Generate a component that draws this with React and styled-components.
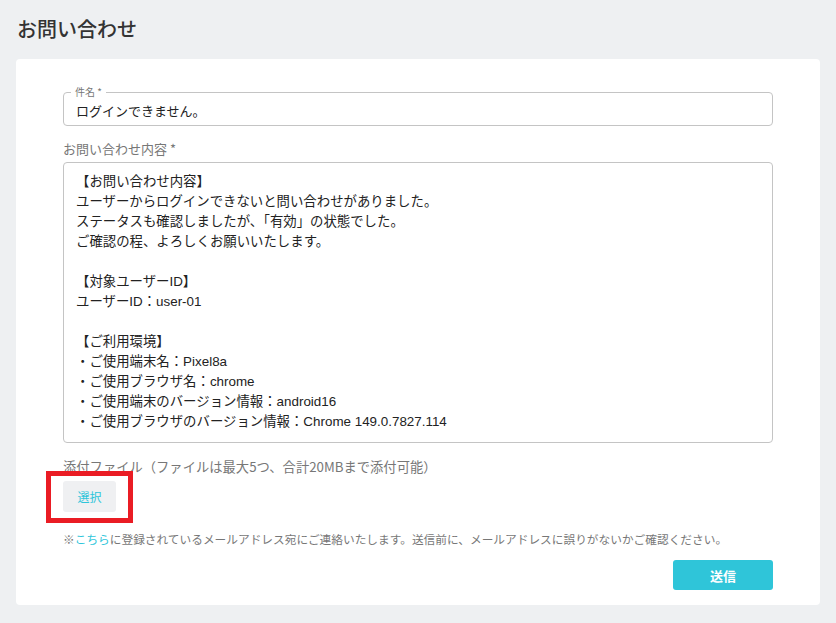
import React from 'react'
import styled, { createGlobalStyle } from 'styled-components'

const GlobalStyle = createGlobalStyle`
  body {
    margin: 0;
    background: #eef0f2;
    font-family: "Noto Sans CJK JP", "Noto Sans", sans-serif;
    color: #333;
  }
`

const Page = styled.div`
  display: flex;
  flex-direction: column;
  padding: 0 16px;
  min-height: 623px;
  box-sizing: border-box;
`

const Title = styled.h1`
  margin: 0;
  padding: 14px 0 0 1px;
  height: 59px;
  font-size: 20px;
  font-weight: 500;
  color: #333;
  box-sizing: border-box;
`

const Card = styled.div`
  background: #fff;
  border-radius: 4px;
  padding: 33px 47px 15px;
  display: flex;
  flex-direction: column;
`

const Outlined = styled.div`
  position: relative;
  border: 1px solid #c4c4c4;
  border-radius: 4px;
  padding: 0 12px;
  height: ${(p) => p.h}px;
  box-sizing: border-box;
  display: flex;
  align-items: center;
`

const FloatLabel = styled.span`
  position: absolute;
  top: -8px;
  left: 7px;
  padding: 0 4px;
  background: #fff;
  font-size: 10px;
  line-height: 14px;
  color: #777;
`

const InputText = styled.span`
  font-size: 13px;
  color: #222;
  padding-top: 2px;
`

const FieldLabel = styled.div`
  font-size: ${(p) => p.fs || 13}px;
  color: #777;
  margin-top: ${(p) => p.mt}px;
  line-height: 18px;
`

const TextArea = styled.div`
  margin-top: 4px;
  border: 1px solid #c4c4c4;
  border-radius: 4px;
  height: 281px;
  box-sizing: border-box;
  padding: 9px 12px 9px;
  white-space: pre-wrap;
  font-family: "Liberation Sans", "Noto Sans CJK JP", sans-serif;
  font-size: 13.4px;
  line-height: 20px;
  color: #222;
`

const UploadWrap = styled.div`
  position: relative;
  margin-top: 5px;
  align-self: flex-start;
`

const GrayButton = styled.button`
  width: 53px;
  height: 31px;
  border: none;
  border-radius: 3px;
  background: #eff0f2;
  color: #2ec5da;
  font-family: inherit;
  font-size: 12px;
  cursor: pointer;
`

const Highlight = styled.div`
  position: absolute;
  left: -17px;
  top: -10px;
  width: 87px;
  height: 52px;
  border: 5px solid #ea1c24;
  box-sizing: border-box;
  pointer-events: none;
`

const Note = styled.p`
  margin: 18px 0 0;
  font-size: 11.7px;
  line-height: 18px;
  color: #777;
`

const Link = styled.a`
  color: #2ec5da;
  text-decoration: none;
`

const Footer = styled.div`
  display: flex;
  justify-content: flex-end;
  margin-top: 12px;
`

const SendButton = styled.button`
  width: 100px;
  height: 30px;
  border: none;
  border-radius: 3px;
  background: #2fc5d9;
  color: #fff;
  font-family: inherit;
  font-size: 13px;
  font-weight: 700;
  cursor: pointer;
`

const body = `【お問い合わせ内容】
ユーザーからログインできないと問い合わせがありました。
ステータスも確認しましたが、「有効」の状態でした。
ご確認の程、よろしくお願いいたします。

【対象ユーザーID】
ユーザーID：user-01

【ご利用環境】
・ご使用端末名：Pixel8a
・ご使用ブラウザ名：chrome
・ご使用端末のバージョン情報：android16
・ご使用ブラウザのバージョン情報：Chrome 149.0.7827.114`

const App = () => {
  return (
    <>
      <GlobalStyle />
      <Page>
        <Title>お問い合わせ</Title>
        <Card>
          <Outlined h={34}>
            <FloatLabel>件名 *</FloatLabel>
            <InputText>ログインできません。</InputText>
          </Outlined>
          <FieldLabel mt={14}>お問い合わせ内容 *</FieldLabel>
          <TextArea>{body}</TextArea>
          <FieldLabel mt={15} fs={13.3}>
            添付ファイル（ファイルは最大5つ、合計20MBまで添付可能）
          </FieldLabel>
          <UploadWrap>
            <GrayButton>選択</GrayButton>
            <Highlight />
          </UploadWrap>
          <Note>
            ※<Link href="#">こちら</Link>
            に登録されているメールアドレス宛にご連絡いたします。送信前に、メールアドレスに誤りがないかご確認ください。
          </Note>
          <Footer>
            <SendButton>送信</SendButton>
          </Footer>
        </Card>
      </Page>
    </>
  )
}

export default App
